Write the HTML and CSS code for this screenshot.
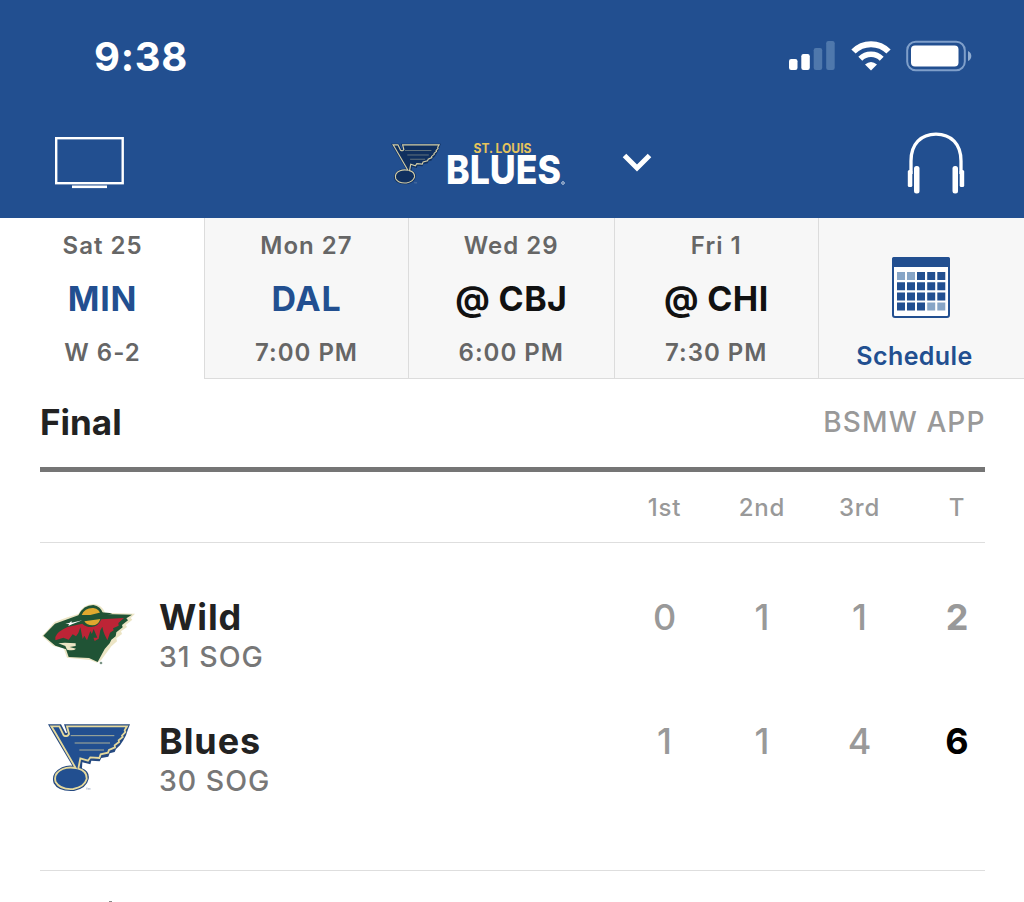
FILE: index.html
```
<!DOCTYPE html>
<html lang="en">
<head>
    <meta charset="UTF-8">
    <meta name="viewport" content="width=device-width, initial-scale=1.0">
    <title>St. Louis Blues</title>
    <link rel="stylesheet" href="styles.css">
</head>
<body>
    <svg class="defs" width="0" height="0">
        <symbol id="note" viewBox="45 30 264 222">
            <path class="note-edge" d="M54 43 H93 L107 69 Q112 70 110 65 L102 43 H300 L294 58 L288 76 L280 91 L270 106 L258 117 L254 126 L239 130 L235 140 L214 144 L209 154 L184 152 L181 163 L157 157 L156 175 Q180 185 176 207 Q170 235 132 243 Q85 246 71 220 Q61 190 96 172 Q112 165 127 167 L69 69 Z"/>
            <path class="note-line" d="M64 49 H88 L101 76 Q112 82 117 72 L111 49 H291 L284 61 L286 66 L276 77 L278 81 L266 91 L267 96 L254 106 L255 112 L237 120 L234 128 L212 133 L208 144 L181 142 L174 152 L151 145 L145 176 Q171 183 170 207 Q163 231 130 237 Q91 240 77 216 Q69 190 98 177 Q115 170 137 174 L75 67 Z"/>
            <path class="note-bar" d="M122 77 H253 M134 99 H240 M148 120 H222"/>
            <path class="note-mark" d="M168 234 h5 M170.500 234 v6 M175 240 v-6 l2.500 4 l2.500 -4 v6"/>
        </symbol>
    </svg>

    <div class="top-bar">
        <div class="status-bar">
            <span class="clock">9:38</span>
            <div class="status-icons">
                <svg class="signal" viewBox="0 0 46 30">
                    <rect x="0" y="18" width="8.5" height="11" rx="2.2" fill="#fff"/>
                    <rect x="12.3" y="13" width="8.5" height="16" rx="2.2" fill="#fff"/>
                    <rect x="24.7" y="7" width="8.5" height="22" rx="2.2" fill="#4f78ac"/>
                    <rect x="37.2" y="0" width="8.5" height="29" rx="2.2" fill="#4f78ac"/>
                </svg>
                <svg class="wifi" viewBox="0 0 40 30">
                    <path d="M2.500 10.500 A24.500 24.500 0 0 1 37.500 10.500" fill="none" stroke="#fff" stroke-width="6"/>
                    <path d="M9.300 17.800 A15 15 0 0 1 30.700 17.800" fill="none" stroke="#fff" stroke-width="5.5"/>
                    <path d="M20 29.5 L14 23.6 Q20 18.6 26 23.6 Z" fill="#fff"/>
                </svg>
                <svg class="battery" viewBox="0 0 66 32">
                    <rect x="1.2" y="1.7" width="57.6" height="28.6" rx="8.5" fill="none" stroke="#7f9fca" stroke-width="2"/>
                    <rect x="5" y="5.5" width="47.500" height="21" rx="4" fill="#fff"/>
                    <path d="M62 11 Q65.3 12.5 65.3 16 Q65.3 19.5 62 21 Z" fill="#90acd0"/>
                </svg>
            </div>
        </div>
        <div class="nav-bar">
            <svg class="tv-icon" viewBox="0 0 70 54">
                <rect x="1.2" y="2.2" width="66.5" height="45" fill="none" stroke="#fff" stroke-width="2.4"/>
                <rect x="17" y="49.5" width="35" height="2.600" fill="#fff"/>
            </svg>
            <div class="team-picker">
                <svg class="team-note"><use href="#note"/></svg>
                <svg class="wordmark" viewBox="0 0 120 48">
                    <text class="wordmark-city" x="26.5" y="14.2" textLength="58" lengthAdjust="spacingAndGlyphs">ST. LOUIS</text>
                    <text class="wordmark-name" x="-1" y="45.2" textLength="115" lengthAdjust="spacingAndGlyphs">BLUES</text>
                    <circle cx="116" cy="44" r="1.3" fill="none" stroke="#c3d0e2"/>
                </svg>
                <svg class="chevron" viewBox="0 0 30 20">
                    <path d="M2.500 2.5 L15 15 L27.500 2.5" fill="none" stroke="#fff" stroke-width="5"/>
                </svg>
            </div>
            <svg class="headphones" viewBox="0 0 58 62">
                <path d="M4 42 V29 C4 12 14 2.2 29 2.2 C44 2.2 54 12 54 29 V42" fill="none" stroke="#fff" stroke-width="3.3"/>
                <rect x="0.8" y="38" width="4.5" height="17" rx="1.5" fill="#fff"/>
                <rect x="52.7" y="38" width="4.5" height="17" rx="1.5" fill="#fff"/>
                <rect x="7" y="34" width="5.5" height="27.5" rx="2.5" fill="#fff"/>
                <rect x="45.5" y="34" width="5.5" height="27.5" rx="2.5" fill="#fff"/>
            </svg>
        </div>
    </div>

    <div class="game-tabs">
        <div class="tab active">
            <div class="tab-date">Sat 25</div>
            <div class="tab-team home">MIN</div>
            <div class="tab-time">W 6-2</div>
        </div>
        <div class="tab">
            <div class="tab-date">Mon 27</div>
            <div class="tab-team home">DAL</div>
            <div class="tab-time">7:00 PM</div>
        </div>
        <div class="tab">
            <div class="tab-date">Wed 29</div>
            <div class="tab-team">@ CBJ</div>
            <div class="tab-time">6:00 PM</div>
        </div>
        <div class="tab">
            <div class="tab-date">Fri 1</div>
            <div class="tab-team">@ CHI</div>
            <div class="tab-time">7:30 PM</div>
        </div>
        <div class="tab schedule">
            <svg class="calendar" viewBox="0 0 58 61">
                <rect x="1" y="1" width="56" height="59" rx="2" fill="#fff" stroke="#224f90" stroke-width="2"/>
                <rect x="0" y="0" width="58" height="10" rx="2" fill="#224f90"/>
                <path d="M5 19h8M15 19h8" stroke="#87a5c6" stroke-width="8"/>
                <path d="M25 19h8M35.2 19h8M45.3 19h8M5 29.2h8M15 29.2h8M25 29.2h8M35.2 29.2h8M45.3 29.2h8M5 39.4h8M15 39.4h8M25 39.4h8M35.2 39.4h8M45.3 39.4h8M5 49.6h8M15 49.6h8M25 49.6h8" stroke="#224f90" stroke-width="8"/>
                <path d="M35.2 49.6h8M45.3 49.6h8" stroke="#87a5c6" stroke-width="8"/>
            </svg>
            <div class="schedule-label">Schedule</div>
        </div>
    </div>

    <div class="game">
        <div class="game-header">
            <span class="game-state">Final</span>
            <span class="network">BSMW APP</span>
        </div>
        <div class="periods">
            <span></span>
            <span>1st</span>
            <span>2nd</span>
            <span>3rd</span>
            <span>T</span>
        </div>
        <div class="teams">
            <div class="team-row">
                <div class="team">
                    <svg class="wild-logo" viewBox="30 30 290 200">
                        <path fill="#ece5c5" d="M36 138 L48 125 L74 96 L112 82 L145 72 Q160 42 190 42 Q216 44 225 68 L315 71 L302 84 L307 89 L287 105 L291 111 L273 124 L276 132 L259 145 L261 154 L244 169 L213 211 L201 218 L180 210 L111 203 L101 175 L70 168 Z"/>
                        <path fill="#205335" d="M40 137 L75 101 L145 76 Q160 45 190 45 Q212 48 220 72 L306 74 L289 85 L294 91 L276 105 L278 112 L259 127 L257 139 L244 149 L239 160 L224 177 L203 216 L177 204 L116 201 L108 178 L76 167 Z"/>
                        <path fill="#e0a92f" d="M155 75 Q164 53 190 54 Q209 57 212 75 Z M163 94 L211 87 Q205 106 187 106 Q170 106 163 94 Z"/>
                        <path fill="#bd2436" d="M76 141 Q82 124 113 111 L157 101 Q166 111 185 111 Q206 109 214 88 L282 84 L265 99 L266 107 L249 115 L251 121 L240 128 L232 151 L224 134 L220 124 L217 110 L211 121 L206 146 L194 153 L187 134 L181 123 L171 151 L163 137 L158 147 L151 112 L145 129 L138 139 L128 133 L116 149 L100 143 L76 151 Z"/>
                        <path fill="#205335" d="M154 82 L214 67 L247 70 L204 83 L168 87 Z M191 117 L202 143 L181 143 Z"/>
                        <path fill="#fff" d="M106 101 L119 98 L124 93 L125 98 L157 91 L126 103 L115 108 L117 102 Z"/>
                        <path fill="#ece5c5" d="M85 160 L105 158 L137 160 L137 168 L119 171 L138 176 Q131 184 111 179 L106 168 Z"/>
                        <circle cx="213" cy="219" r="4" fill="#7c9586"/>
                    </svg>
                    <div class="team-text">
                        <div class="team-name">Wild</div>
                        <div class="shots">31 SOG</div>
                    </div>
                </div>
                <span class="score">0</span>
                <span class="score">1</span>
                <span class="score">1</span>
                <span class="score total">2</span>
            </div>
            <div class="team-row">
                <div class="team">
                    <svg class="blues-logo"><use href="#note"/></svg>
                    <div class="team-text">
                        <div class="team-name">Blues</div>
                        <div class="shots">30 SOG</div>
                    </div>
                </div>
                <span class="score">1</span>
                <span class="score">1</span>
                <span class="score">4</span>
                <span class="score total winner">6</span>
            </div>
        </div>
        <div class="next-section"><div class="peek"></div></div>
    </div>
</body>
</html>
```
FILE: styles.css
```
* {
    box-sizing: border-box;
}

body {
    font-family: Inter, "Liberation Sans", sans-serif;
    background-color: #fff;
    margin: 0;
    height: 902px;
    overflow: hidden;
}

svg {
    display: block;
    flex-shrink: 0;
}

.defs {
    position: absolute;
}

/* header */
.top-bar {
    height: 218px;
    background-color: #224f90;
    color: #fff;
}

.status-bar {
    display: flex;
    justify-content: space-between;
    height: 112px;
    padding: 0 52px 0 94px;
}

.clock {
    font-size: 40px;
    font-weight: 700;
    letter-spacing: 0.7px;
    line-height: 113px;
}

.status-icons {
    display: flex;
    align-items: center;
}

.signal {
    width: 46px;
    height: 30px;
    margin-right: 16px;
}

.wifi {
    width: 40px;
    height: 30px;
    margin-right: 15px;
}

.battery {
    width: 66px;
    height: 32px;
}

.nav-bar {
    display: flex;
    justify-content: space-between;
    align-items: center;
    height: 102px;
    padding: 0 59px 0 55px;
}

.tv-icon {
    width: 70px;
    height: 54px;
}

.team-picker {
    display: flex;
    align-items: center;
    margin-left: 9px;
}

.team-note {
    width: 54px;
    height: 45px;
    margin-right: 4px;
    --note-fill: #10305f;
    --note-edge: #10305f;
    --note-line: #d5cfa8;
}

.wordmark {
    width: 120px;
    height: 48px;
    margin-right: 55px;
    overflow: visible;
}

.wordmark-city {
    font-size: 13px;
    font-weight: 700;
    fill: #e6c45c;
}

.wordmark-name {
    font-size: 40px;
    font-weight: 800;
    fill: #fff;
}

.chevron {
    width: 30px;
    height: 20px;
}

.headphones {
    width: 58px;
    height: 62px;
}

.note-edge {
    fill: var(--note-edge);
}

.note-line {
    fill: var(--note-fill);
    stroke: var(--note-line);
    stroke-width: 5.5;
}

.note-bar {
    fill: none;
    stroke: var(--note-line);
    stroke-width: 3;
    opacity: 0.7;
}

.note-mark {
    fill: none;
    stroke: #8f9fb8;
    stroke-width: 1.2;
}

/* game tabs */
.game-tabs {
    display: grid;
    grid-template-columns: 204px 204px 205.5px 204.5px 1fr;
    height: 161px;
    text-align: center;
}

.tab {
    padding-top: 8px;
    background-color: #f7f7f7;
    border-left: 1px solid #dcdcdc;
    border-bottom: 1px solid #dcdcdc;
}

.tab.active {
    background-color: #fff;
    border-color: transparent;
}

.tab-date, .tab-time {
    color: #666;
    font-size: 24px;
    font-weight: 600;
    letter-spacing: 1px;
    line-height: 40px;
}

.tab-team {
    color: #111;
    font-size: 34px;
    font-weight: 700;
    letter-spacing: 0.4px;
    line-height: 66px;
}

.tab-team.home {
    color: #224f90;
    letter-spacing: 0.8px;
}

.tab-time {
    line-height: 41px;
}

.tab.schedule {
    padding-top: 39px;
    padding-right: 14px;
}

.calendar {
    width: 58px;
    height: 61px;
    margin: 0 auto 17px 73px;
}

.schedule-label {
    color: #224f90;
    font-size: 25px;
    font-weight: 600;
    letter-spacing: 0.4px;
    line-height: 42px;
}

/* box score */
.game {
    padding: 0 39px 0 40px;
}

.game-header {
    display: flex;
    justify-content: space-between;
    height: 93px;
    border-bottom: 5px solid #757575;
    line-height: 86px;
}

.game-state {
    color: #222;
    font-size: 35px;
    font-weight: 700;
}

.network {
    color: #999;
    font-size: 28px;
    font-weight: 450;
    letter-spacing: 1.1px;
    margin-right: -0.5px;
}

.periods, .team-row {
    display: grid;
    grid-template-columns: 1fr repeat(4, 56px);
    column-gap: 41.5px;
    text-align: center;
}

.periods {
    height: 71px;
    border-bottom: 1px solid #dedede;
    color: #999;
    font-size: 24px;
    font-weight: 450;
    letter-spacing: 0.8px;
    line-height: 72px;
}

.teams {
    padding: 52px 0 71px;
    border-bottom: 1px solid #dedede;
}

.team-row {
    height: 80px;
    margin-bottom: 44px;
}

.team-row:last-child {
    margin-bottom: 0;
}

.team {
    display: grid;
    grid-template-columns: 119px 1fr;
    text-align: left;
}

.wild-logo {
    width: 96.7px;
    height: 66.7px;
    margin-top: 5px;
}

.blues-logo {
    width: 88px;
    height: 74px;
    margin: 1px 0 0 5px;
    --note-fill: #224f90;
    --note-edge: #254980;
    --note-line: #e5d99d;
}

.team-name {
    color: #222;
    font-size: 36px;
    font-weight: 700;
    letter-spacing: 0.9px;
    line-height: 44px;
}

.shots {
    color: #777;
    font-size: 28.5px;
    font-weight: 450;
    letter-spacing: 1px;
    line-height: 36px;
}

.score {
    color: #999;
    font-size: 36px;
    font-weight: 500;
    line-height: 44px;
}

.total {
    font-weight: 700;
}

.winner {
    color: #000;
}

.next-section {
    padding: 30px 0 0 69px;
}

.peek {
    width: 3px;
    height: 1px;
    background-color: #888;
}
```
